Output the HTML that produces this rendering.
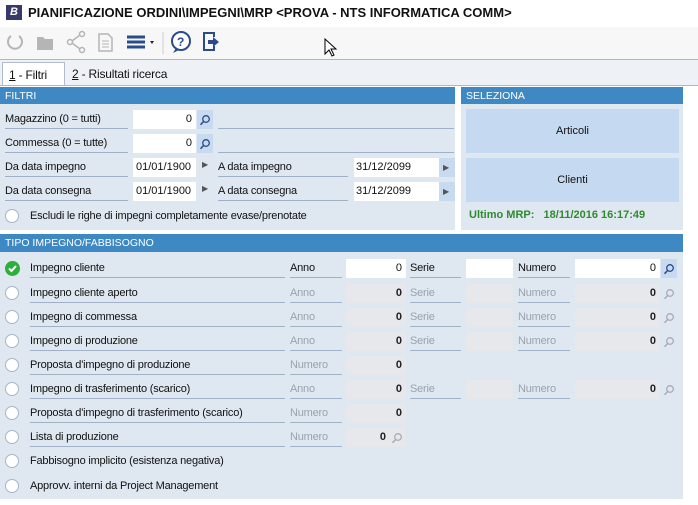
<!DOCTYPE html>
<html><head><meta charset="utf-8"><style>
*{box-sizing:border-box;margin:0;padding:0}
body{width:698px;height:505px;background:#fff;font-family:"Liberation Sans",sans-serif;font-size:11px;color:#111;position:relative;overflow:hidden}
.a{position:absolute}
.hdr{background:#3e89c4;color:#fff;font-size:10.5px;padding:3px 5px;height:17px}
.lbl{position:absolute;height:19px;line-height:19px;border-bottom:1px solid #9fb1c8;white-space:nowrap;letter-spacing:-0.2px}
.inp{position:absolute;height:19px;line-height:19px;background:#fff;text-align:right;padding-right:4px}
.dis{background:#e6e8ec;color:#222;font-weight:bold}
.g{color:#9aa3ad}
.btn{position:absolute;width:16px;height:19px;background:#c8daf0}
.rad{position:absolute;width:14px;height:14px;border-radius:50%;background:#fff;border:1px solid #a9b5c4}
.m{position:absolute}
</style></head><body>
<svg width="0" height="0" style="position:absolute"><defs><g id="mg"><circle cx="7" cy="5" r="3.3" fill="none" stroke-width="1.3"/><path d="M4.8 7.4L1.5 10.7" stroke-width="1.5"/></g></defs></svg>
<div class="a" style="left:6px;top:5px;width:16px;height:15px;background:#38396a;color:#fff;font-size:11px;font-weight:bold;font-style:italic;text-align:center;line-height:15px">B</div>
<div class="a" style="left:28px;top:5px;font-size:13px;font-weight:bold;letter-spacing:0px">PIANIFICAZIONE ORDINI\IMPEGNI\MRP &lt;PROVA - NTS INFORMATICA COMM&gt;</div>
<div class="a" style="left:0;top:27px;width:698px;height:32px;background:#f7f7f7"></div>
<svg class="a" style="left:0;top:27px" width="240" height="32">
<path d="M11 9 A7 7 0 1 0 19 9" fill="none" stroke="#b5b5b5" stroke-width="2"/>
<path d="M37 10h6l2 2h8v11h-16z" fill="#b5b5b5"/>
<circle cx="82" cy="7" r="2.5" fill="none" stroke="#b5b5b5" stroke-width="1.5"/><circle cx="70" cy="15" r="2.5" fill="none" stroke="#b5b5b5" stroke-width="1.5"/><circle cx="82" cy="23" r="2.5" fill="none" stroke="#b5b5b5" stroke-width="1.5"/><path d="M72 14l8-6M72 16l8 6" stroke="#b5b5b5" stroke-width="1.5"/>
<path d="M99 7h9l4 4v13h-13z" fill="none" stroke="#b5b5b5" stroke-width="1.5"/><path d="M102 14h7M102 17h7M102 20h7" stroke="#b5b5b5"/>
<path d="M127 10h18M127 15h18M127 20h18" stroke="#2b4c8c" stroke-width="3"/><path d="M150 14h4l-2 3z" fill="#222"/>
<path d="M163 5v22" stroke="#ccc"/>
<circle cx="181" cy="14" r="9" fill="#fff" stroke="#2b4c8c" stroke-width="2"/><path d="M176 21l-3 5 6-3" fill="#2b4c8c"/><text x="177" y="19" font-size="12" font-weight="bold" fill="#2b4c8c" font-family="Liberation Sans">?</text>
<path d="M208 6h-4v17h10v-4" fill="none" stroke="#2b4c8c" stroke-width="2"/><path d="M208 6h6v4" fill="none" stroke="#2b4c8c" stroke-width="2"/><path d="M208 13h5v-3l6 5-6 5v-3h-5z" fill="#2b4c8c"/>
</svg>
<svg class="a" style="left:324px;top:38px" width="14" height="20"><path d="M1 1v15l4-4 3 6 2-1-3-6h5z" fill="#fff" stroke="#000"/></svg>
<div class="a" style="left:0;top:59px;width:698px;height:1px;background:#aab8cc"></div>
<div class="a" style="left:0;top:60px;width:698px;height:25px;background:#eef2f7"></div>
<div class="a" style="left:2px;top:62px;width:63px;height:23px;background:#fff;border:1px solid #b0bccc;border-bottom:none;padding:5px 6px;font-size:12px;letter-spacing:-0.2px"><u>1</u> - Filtri</div>
<div class="a" style="left:72px;top:67px;font-size:12px;letter-spacing:-0.2px"><u>2</u> - Risultati ricerca</div>
<div class="a" style="left:0;top:85px;width:698px;height:1px;background:#aab8cc"></div>

<div class="a" style="left:0;top:87px;width:455px;height:143px;background:#dfe7f1"></div>
<div class="a hdr" style="left:0;top:87px;width:455px">FILTRI</div>
<div class="lbl" style="left:5px;top:110px;width:123px">Magazzino (0 = tutti)</div>
<div class="inp" style="left:133px;top:110px;width:63px">0</div><div class="btn" style="left:197px;top:110px"><svg class="m" style="left:2px;top:4px" width="12" height="12" stroke="#2b4c8c"><use href="#mg"/></svg></div>
<div class="lbl" style="left:218px;top:110px;width:236px"></div>
<div class="lbl" style="left:5px;top:134px;width:123px">Commessa (0 = tutte)</div>
<div class="inp" style="left:133px;top:134px;width:63px">0</div><div class="btn" style="left:197px;top:134px"><svg class="m" style="left:2px;top:4px" width="12" height="12" stroke="#2b4c8c"><use href="#mg"/></svg></div>
<div class="lbl" style="left:218px;top:134px;width:236px"></div>
<div class="lbl" style="left:5px;top:158px;width:123px">Da data impegno</div>
<div class="inp" style="left:133px;top:158px;width:63px;text-align:left;padding-left:3px">01/01/1900</div><div class="a" style="left:202px;top:160px;font-size:8px;color:#555">▶</div>
<div class="lbl" style="left:218px;top:158px;width:130px">A data impegno</div>
<div class="inp" style="left:354px;top:158px;width:85px;text-align:left;padding-left:2px">31/12/2099</div><div class="btn" style="left:439px;top:158px;font-size:8px;color:#555;padding:5px 0 0 4px">▶</div>
<div class="lbl" style="left:5px;top:182px;width:123px">Da data consegna</div>
<div class="inp" style="left:133px;top:182px;width:63px;text-align:left;padding-left:3px">01/01/1900</div><div class="a" style="left:202px;top:184px;font-size:8px;color:#555">▶</div>
<div class="lbl" style="left:218px;top:182px;width:130px">A data consegna</div>
<div class="inp" style="left:354px;top:182px;width:85px;text-align:left;padding-left:2px">31/12/2099</div><div class="btn" style="left:439px;top:182px;font-size:8px;color:#555;padding:5px 0 0 4px">▶</div>
<div class="rad" style="left:5px;top:209px"></div>
<div class="a" style="left:30px;top:210px;letter-spacing:-0.2px">Escludi le righe di impegni completamente evase/prenotate</div>

<div class="a" style="left:461px;top:87px;width:222px;height:143px;background:#dfe7f1"></div>
<div class="a hdr" style="left:461px;top:87px;width:222px">SELEZIONA</div>
<div class="a" style="left:466px;top:109px;width:213px;height:44px;background:#c5d9f1;text-align:center;line-height:44px">Articoli</div>
<div class="a" style="left:466px;top:158px;width:213px;height:44px;background:#c5d9f1;text-align:center;line-height:44px">Clienti</div>
<div class="a" style="left:469px;top:209px;color:#2e8b2e;font-weight:bold;font-size:11px;white-space:pre">Ultimo MRP:   18/11/2016 16:17:49</div>

<div class="a" style="left:0;top:234px;width:683px;height:265px;background:#dfe7f1"></div>
<div class="a hdr" style="left:0;top:234px;width:683px;height:18px">TIPO IMPEGNO/FABBISOGNO</div>

<svg class="a" style="left:5px;top:261px" width="15" height="15"><circle cx="7.5" cy="7.5" r="7.5" fill="#2eae3c"/><path d="M4 7.5l2.5 2.5 4.5-5" stroke="#fff" stroke-width="2" fill="none"/></svg>
<div class="lbl" style="left:30px;top:259px;width:255px">Impegno cliente</div>
<div class="lbl" style="left:290px;top:259px;width:52px">Anno</div>
<div class="inp" style="left:346px;top:259px;width:60px">0</div>
<div class="lbl" style="left:410px;top:259px;width:51px">Serie</div>
<div class="inp" style="left:466px;top:259px;width:47px"></div>
<div class="lbl" style="left:518px;top:259px;width:52px">Numero</div>
<div class="inp" style="left:575px;top:259px;width:85px">0</div><div class="btn" style="left:661px;top:259px"><svg class="m" style="left:2px;top:4px" width="12" height="12" stroke="#2b4c8c"><use href="#mg"/></svg></div>

<div class="rad" style="left:5px;top:286px"></div><div class="lbl" style="left:30px;top:284px;width:255px">Impegno cliente aperto</div>
<div class="lbl g" style="left:290px;top:284px;width:52px">Anno</div><div class="inp dis" style="left:346px;top:284px;width:60px">0</div>
<div class="lbl g" style="left:410px;top:284px;width:51px">Serie</div><div class="inp dis" style="left:466px;top:284px;width:47px"></div>
<div class="lbl g" style="left:518px;top:284px;width:52px">Numero</div><div class="inp dis" style="left:575px;top:284px;width:85px">0</div><svg class="m" style="left:663px;top:288px" width="12" height="12" stroke="#aab"><use href="#mg"/></svg>

<div class="rad" style="left:5px;top:310px"></div><div class="lbl" style="left:30px;top:308px;width:255px">Impegno di commessa</div>
<div class="lbl g" style="left:290px;top:308px;width:52px">Anno</div><div class="inp dis" style="left:346px;top:308px;width:60px">0</div>
<div class="lbl g" style="left:410px;top:308px;width:51px">Serie</div><div class="inp dis" style="left:466px;top:308px;width:47px"></div>
<div class="lbl g" style="left:518px;top:308px;width:52px">Numero</div><div class="inp dis" style="left:575px;top:308px;width:85px">0</div><svg class="m" style="left:663px;top:312px" width="12" height="12" stroke="#aab"><use href="#mg"/></svg>

<div class="rad" style="left:5px;top:334px"></div><div class="lbl" style="left:30px;top:332px;width:255px">Impegno di produzione</div>
<div class="lbl g" style="left:290px;top:332px;width:52px">Anno</div><div class="inp dis" style="left:346px;top:332px;width:60px">0</div>
<div class="lbl g" style="left:410px;top:332px;width:51px">Serie</div><div class="inp dis" style="left:466px;top:332px;width:47px"></div>
<div class="lbl g" style="left:518px;top:332px;width:52px">Numero</div><div class="inp dis" style="left:575px;top:332px;width:85px">0</div><svg class="m" style="left:663px;top:336px" width="12" height="12" stroke="#aab"><use href="#mg"/></svg>

<div class="rad" style="left:5px;top:358px"></div><div class="lbl" style="left:30px;top:356px;width:255px">Proposta d'impegno di produzione</div>
<div class="lbl g" style="left:290px;top:356px;width:52px">Numero</div><div class="inp dis" style="left:346px;top:356px;width:60px">0</div>

<div class="rad" style="left:5px;top:382px"></div><div class="lbl" style="left:30px;top:380px;width:255px">Impegno di trasferimento (scarico)</div>
<div class="lbl g" style="left:290px;top:380px;width:52px">Anno</div><div class="inp dis" style="left:346px;top:380px;width:60px">0</div>
<div class="lbl g" style="left:410px;top:380px;width:51px">Serie</div><div class="inp dis" style="left:466px;top:380px;width:47px"></div>
<div class="lbl g" style="left:518px;top:380px;width:52px">Numero</div><div class="inp dis" style="left:575px;top:380px;width:85px">0</div><svg class="m" style="left:663px;top:384px" width="12" height="12" stroke="#aab"><use href="#mg"/></svg>

<div class="rad" style="left:5px;top:406px"></div><div class="lbl" style="left:30px;top:404px;width:255px">Proposta d'impegno di trasferimento (scarico)</div>
<div class="lbl g" style="left:290px;top:404px;width:52px">Numero</div><div class="inp dis" style="left:346px;top:404px;width:60px">0</div>

<div class="rad" style="left:5px;top:430px"></div><div class="lbl" style="left:30px;top:428px;width:255px">Lista di produzione</div>
<div class="lbl g" style="left:290px;top:428px;width:52px">Numero</div><div class="inp dis" style="left:346px;top:428px;width:60px;padding-right:20px">0</div><svg class="m" style="left:391px;top:432px" width="12" height="12" stroke="#aab"><use href="#mg"/></svg>

<div class="rad" style="left:5px;top:454px"></div><div class="a" style="left:30px;top:455px;letter-spacing:-0.2px">Fabbisogno implicito (esistenza negativa)</div>
<div class="rad" style="left:5px;top:479px"></div><div class="a" style="left:30px;top:480px;letter-spacing:-0.2px">Approvv. interni da Project Management</div>
</body></html>
